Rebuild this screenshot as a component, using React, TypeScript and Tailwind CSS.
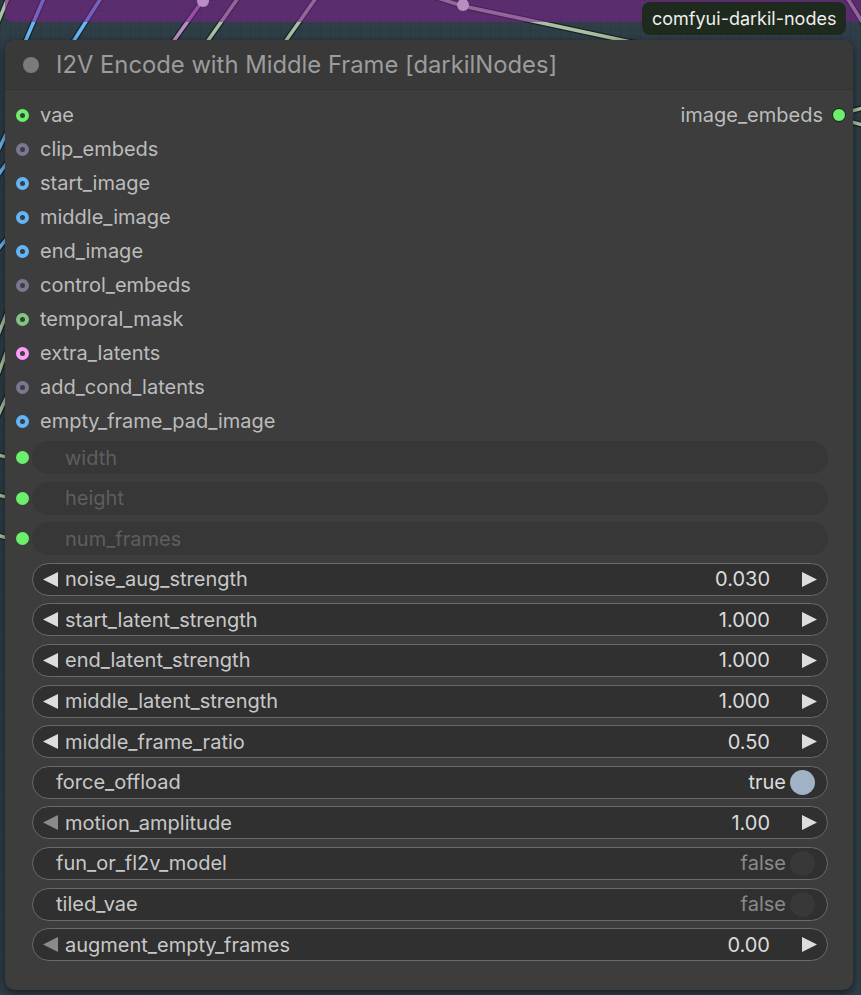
import React from 'react';

type Slot = { name: string; ring: string };

const slots: Slot[] = [
  { name: 'vae', ring: 'border-[#6cf06c]' },
  { name: 'clip_embeds', ring: 'border-[#7a7890]' },
  { name: 'start_image', ring: 'border-[#64b5f6]' },
  { name: 'middle_image', ring: 'border-[#64b5f6]' },
  { name: 'end_image', ring: 'border-[#64b5f6]' },
  { name: 'control_embeds', ring: 'border-[#7a7890]' },
  { name: 'temporal_mask', ring: 'border-[#81c784]' },
  { name: 'extra_latents', ring: 'border-[#ff9cf9]' },
  { name: 'add_cond_latents', ring: 'border-[#7a7890]' },
  { name: 'empty_frame_pad_image', ring: 'border-[#64b5f6]' },
];

type Widget =
  | { kind: 'number'; name: string; value: string; dimLeft?: boolean }
  | { kind: 'toggle'; name: string; on: boolean };

const widgets: Widget[] = [
  { kind: 'number', name: 'noise_aug_strength', value: '0.030' },
  { kind: 'number', name: 'start_latent_strength', value: '1.000' },
  { kind: 'number', name: 'end_latent_strength', value: '1.000' },
  { kind: 'number', name: 'middle_latent_strength', value: '1.000' },
  { kind: 'number', name: 'middle_frame_ratio', value: '0.50' },
  { kind: 'toggle', name: 'force_offload', on: true },
  { kind: 'number', name: 'motion_amplitude', value: '1.00', dimLeft: true },
  { kind: 'toggle', name: 'fun_or_fl2v_model', on: false },
  { kind: 'toggle', name: 'tiled_vae', on: false },
  { kind: 'number', name: 'augment_empty_frames', value: '0.00', dimLeft: true },
];

function Link({ d, color }: { d: string; color: string }) {
  return (
    <g fill="none" strokeLinecap="round">
      <path d={d} stroke="#1b2228" strokeWidth={6} />
      <path d={d} stroke={color} strokeWidth={3.5} />
    </g>
  );
}

function Canvas() {
  const green = '#a9bfa3';
  const blue = '#66b6f6';
  const pink = '#b98cc4';
  return (
    <svg className="absolute inset-0" width={861} height={995}>
      <defs>
        <pattern id="grid" width="10" height="10" patternUnits="userSpaceOnUse">
          <path d="M10 0 L0 0 L0 10" fill="none" stroke="#2a363e" strokeWidth={1} />
        </pattern>
      </defs>
      <rect width={861} height={995} fill="#2f3e47" />
      <rect width={861} height={995} fill="url(#grid)" />
      <Link d="M -6 32 L 8 -2" color={green} />
      <Link d="M 25 42 L 44 -2" color={blue} />
      <Link d="M 73 42 L 101 -2" color={blue} />
      <Link d="M 173 42 L 203 0" color={pink} />
      <Link d="M 207 42 L 238 -2" color={green} />
      <Link d="M 285 42 L 316 -2" color={green} />
      <Link d="M 425 -6 L 463 6 L 640 44" color={green} />
      <Link d="M 846 -4 L 866 28" color={green} />
      <Link d="M 848 112 L 870 106" color={green} />
      <Link d="M 848 121 L 870 127" color={green} />
      <Link d="M -4 155 L 9 128" color={blue} />
      <Link d="M -4 178 L 9 160" color={blue} />
      <Link d="M -4 252 L 9 236" color={blue} />
      <Link d="M -4 340 L 9 308" color={green} />
      <Link d="M -4 380 L 9 345" color={green} />
      <Link d="M -4 420 L 9 392" color={green} />
      <Link d="M -6 454 L 14 459" color={green} />
      <Link d="M -6 494 L 14 499" color={green} />
      <Link d="M -6 534 L 14 540" color={green} />
      <path d="M 5 -20 L 880 -20 L 880 22 L 13 22 Q 5 22 5 14 Z" fill="#7d1f8e" fillOpacity={0.55} />
      <circle cx={203} cy={1} r={6} fill={pink} />
      <circle cx={463} cy={5} r={6} fill="#b78ec2" />
    </svg>
  );
}

function LeftArrow({ dim }: { dim?: boolean }) {
  return (
    <svg width="17" height="17" viewBox="0 0 17 17" className="shrink-0">
      <path d="M1 8.5 L16 1 L16 16 Z" fill={dim ? '#8a8a8a' : '#dddddd'} />
    </svg>
  );
}

function RightArrow() {
  return (
    <svg width="17" height="17" viewBox="0 0 17 17" className="shrink-0">
      <path d="M16 8.5 L1 1 L1 16 Z" fill="#dddddd" />
    </svg>
  );
}

function WidgetRow({ w }: { w: Widget }) {
  if (w.kind === 'toggle') {
    return (
      <div className="h-[33px] ml-[27px] mr-[25px] rounded-full border border-[#6a6a6a] bg-[#303030] flex items-center pl-[23px] pr-[12px]">
        <span className="flex-1 text-[#c8c8c8]">{w.name}</span>
        <span className={w.on ? 'text-[#dcdcdc]' : 'text-[#8a8a8a]'}>{w.on ? 'true' : 'false'}</span>
        <span
          className={
            w.on
              ? 'ml-[4px] w-[25px] h-[25px] rounded-full bg-[#a0b2c6]'
              : 'ml-[4px] w-[25px] h-[25px] rounded-full bg-[#383838]'
          }
        />
      </div>
    );
  }
  return (
    <div className="h-[33px] ml-[27px] mr-[25px] rounded-full border border-[#6a6a6a] bg-[#303030] flex items-center pl-[9px] pr-[9px]">
      <LeftArrow dim={w.dimLeft} />
      <span className="flex-1 ml-[6px] text-[#c8c8c8]">{w.name}</span>
      <span className="text-[#dcdcdc]">{w.value}</span>
      <span className="ml-[31px]">
        <RightArrow />
      </span>
    </div>
  );
}

function DisabledRow({ name }: { name: string }) {
  return (
    <div className="h-[33px] flex items-center">
      <span className="ml-[11px] w-[13px] h-[13px] rounded-full bg-[#6cf06c]" />
      <div className="ml-[3px] mr-[25px] flex-1 h-[33px] rounded-full bg-[#373737] flex items-center pl-[33px] text-[#5e5e5e]">
        {name}
      </div>
    </div>
  );
}

export default function App() {
  return (
    <div className="relative w-[861px] h-[995px] overflow-hidden font-['Inter','Liberation_Sans',sans-serif]">
      <Canvas />
      <div className="absolute left-[5px] top-[40px] w-[848px] h-[950px] rounded-[10px] bg-[#3d3d3d] shadow-[0_3px_10px_rgba(0,0,0,0.55)] flex flex-col text-[20px]">
        <div className="h-[50px] rounded-t-[10px] bg-[#393939] border-b border-[#333333] flex items-center pl-[18px]">
          <span className="w-[16px] h-[16px] rounded-full bg-[#7b7b7b]" />
          <span className="ml-[17px] text-[23.8px] text-[#9c9c9c]">I2V Encode with Middle Frame [darkilNodes]</span>
        </div>
        <div className="pt-[8px] flex flex-col">
          {slots.map((s, i) => (
            <div key={s.name} className="h-[34px] flex items-center">
              <span className={`ml-[11px] w-[13px] h-[13px] rounded-full border-[4.5px] ${s.ring}`} />
              <span className="ml-[11px] text-[#bcbcbc] flex-1">{s.name}</span>
              {i === 0 && (
                <>
                  <span className="text-[#bcbcbc]">image_embeds</span>
                  <span className="ml-[9px] mr-[7px] w-[14px] h-[14px] rounded-full bg-[#6cf06c] border border-[#1a1a1a]" />
                </>
              )}
            </div>
          ))}
        </div>
        <div className="mt-[3px] flex flex-col gap-[7.6px]">
          <DisabledRow name="width" />
          <DisabledRow name="height" />
          <DisabledRow name="num_frames" />
          {widgets.map((w) => (
            <WidgetRow key={w.name} w={w} />
          ))}
        </div>
      </div>
      <div className="absolute left-[642px] top-[2px] h-[33px] px-[10px] rounded-[8px] bg-[#1f2a1e] flex items-center text-[18px] text-[#eeeeee]">
        comfyui-darkil-nodes
      </div>
    </div>
  );
}
